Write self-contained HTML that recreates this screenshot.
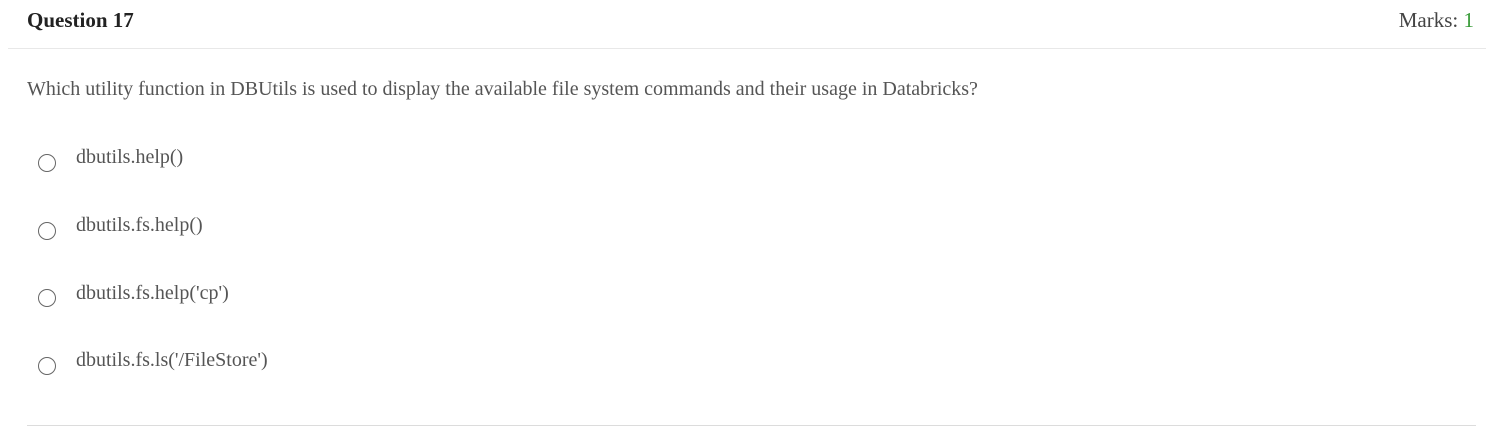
<!DOCTYPE html>
<html><head><style>
body{margin:0;width:1486px;height:432px;background:#fff;font-family:"Liberation Serif","Times New Roman",Times,serif;position:relative;overflow:hidden}
.a{position:absolute;white-space:nowrap}
.q{left:27px;top:8px;font-size:21px;font-weight:bold;color:#222}
.m{right:12px;top:8px;font-size:21px;color:#444}
.m span{color:#3a9c3a}
.hl{position:absolute;left:8px;right:0;top:48px;height:1px;background:#e8e8e8}
.bl{position:absolute;left:27px;width:1449px;top:425px;height:1px;background:#dcdcdc}
.t{left:27px;top:78px;font-size:20px;color:#555}
.o{left:76px;font-size:20px;color:#555}
.r{position:absolute;left:38px;width:18px;height:18px;border:1.5px solid #666;border-radius:50%;box-sizing:border-box}
</style></head><body>
<div class="a q">Question 17</div>
<div class="a m">Marks: <span>1</span></div>
<div class="hl"></div>
<div class="a t">Which utility function in DBUtils is used to display the available file system commands and their usage in Databricks?</div>
<div class="r" style="top:154px"></div><div class="a o" style="top:146px">dbutils.help()</div>
<div class="r" style="top:222px"></div><div class="a o" style="top:214px">dbutils.fs.help()</div>
<div class="r" style="top:289px"></div><div class="a o" style="top:282px">dbutils.fs.help('cp')</div>
<div class="r" style="top:357px"></div><div class="a o" style="top:349px">dbutils.fs.ls('/FileStore')</div>
<div class="bl"></div>
</body></html>
